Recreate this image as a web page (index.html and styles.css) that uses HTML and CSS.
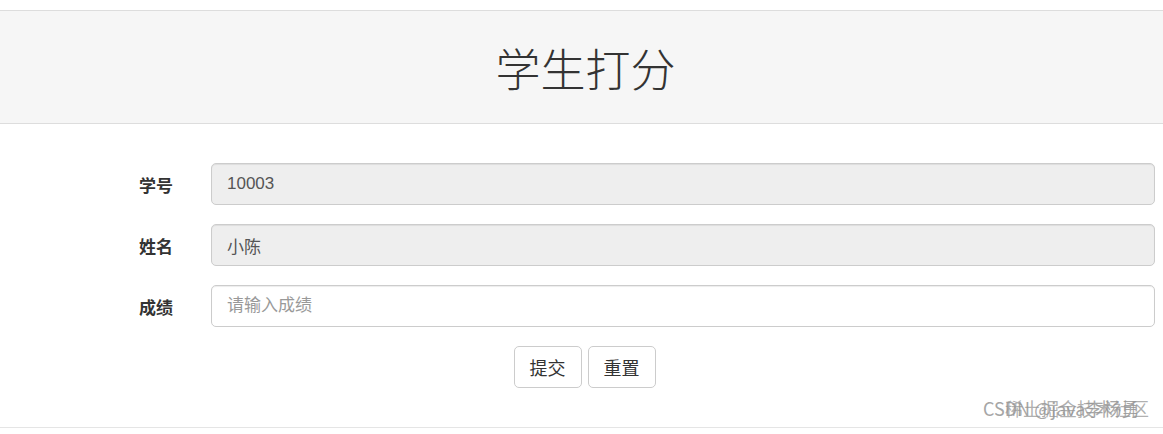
FILE: index.html
```html
<!DOCTYPE html>
<html lang="zh-CN">
<head>
    <meta charset="UTF-8">
    <title>学生打分</title>
    <link rel="stylesheet" href="styles.css">
</head>
<body>
    <div class="page">
        <div class="jumbo">
            <h1>学生打分</h1>
        </div>

        <form class="score-form">
            <div class="row">
                <label>学号</label>
                <input class="field" type="text" value="10003" readonly>
            </div>
            <div class="row">
                <label>姓名</label>
                <input class="field" type="text" value="小陈" readonly>
            </div>
            <div class="row">
                <label>成绩</label>
                <input class="field" type="text" placeholder="请输入成绩">
            </div>
            <div class="actions">
                <button type="button" class="btn">提交</button>
                <button type="reset" class="btn">重置</button>
            </div>
        </form>
        <div class="foot"></div>

        <div class="watermark">
            <span class="wm-a">CSDN @java李杨勇</span>
            <span class="wm-b">稀土掘金技术社区</span>
        </div>
    </div>
</body>
</html>
```

FILE: styles.css
```css
body {
    margin: 0;
    background: #fff;
    font-family: "Liberation Sans", Arial, "Noto Sans CJK SC", sans-serif;
    color: #333;
}
.page {
    position: relative;
    height: 434px;
    padding-top: 10px;
    box-sizing: border-box;
}
.jumbo {
    background: #f6f6f6;
    border-top: 1px solid #dddddd;
    border-bottom: 1px solid #dddddd;
    height: 112px;
    display: flex;
    align-items: center;
    justify-content: center;
}
.jumbo h1 {
    margin: 0 0 0 8px;
    font-family: "Noto Sans CJK SC", sans-serif;
    font-size: 45px;
    font-weight: 300;
    color: #333;
}
.score-form {
    padding: 39px 8px 0 0;
}
.row {
    display: flex;
    align-items: center;
    margin-bottom: 19px;
}
.row label {
    flex: 0 0 211px;
    padding-right: 38px;
    text-align: right;
    font-family: "Noto Sans CJK SC", sans-serif;
    font-size: 17px;
    font-weight: bold;
    color: #333;
    box-sizing: border-box;
}
.field {
    flex: 1;
    min-width: 0;
    height: 42px;
    box-sizing: border-box;
    border: 1px solid #cccccc;
    border-radius: 5px;
    padding: 0 15px;
    font-family: "Liberation Sans", Arial, "Noto Sans CJK SC", sans-serif;
    font-size: 17px;
    color: #555;
    background: #fff;
    box-shadow: inset 0 1px 1px rgba(0, 0, 0, 0.075);
}
.field[readonly] {
    background: #eeeeee;
}
.field::placeholder {
    color: #999;
}
.actions {
    display: flex;
    justify-content: center;
    gap: 6px;
    padding-left: 14px;
}
.btn {
    height: 42px;
    padding: 0 15px;
    border: 1px solid #cccccc;
    border-radius: 5px;
    background: #fff;
    font-family: "Noto Sans CJK SC", sans-serif;
    font-size: 18px;
    color: #333;
}
.foot {
    position: absolute;
    left: 0;
    right: 0;
    top: 427px;
    border-top: 1px solid #e5e5e5;
}
.watermark {
    position: absolute;
    right: 12px;
    top: 395px;
    width: 168px;
    height: 26px;
    font-family: "Noto Sans CJK SC", sans-serif;
    font-size: 18px;
    color: #a6a6a6;
}
.watermark span {
    position: absolute;
    top: 0;
    white-space: nowrap;
}
.wm-a {
    left: 0;
}
.wm-b {
    left: 22px;
    color: rgba(150, 150, 150, 0.75);
}
```
